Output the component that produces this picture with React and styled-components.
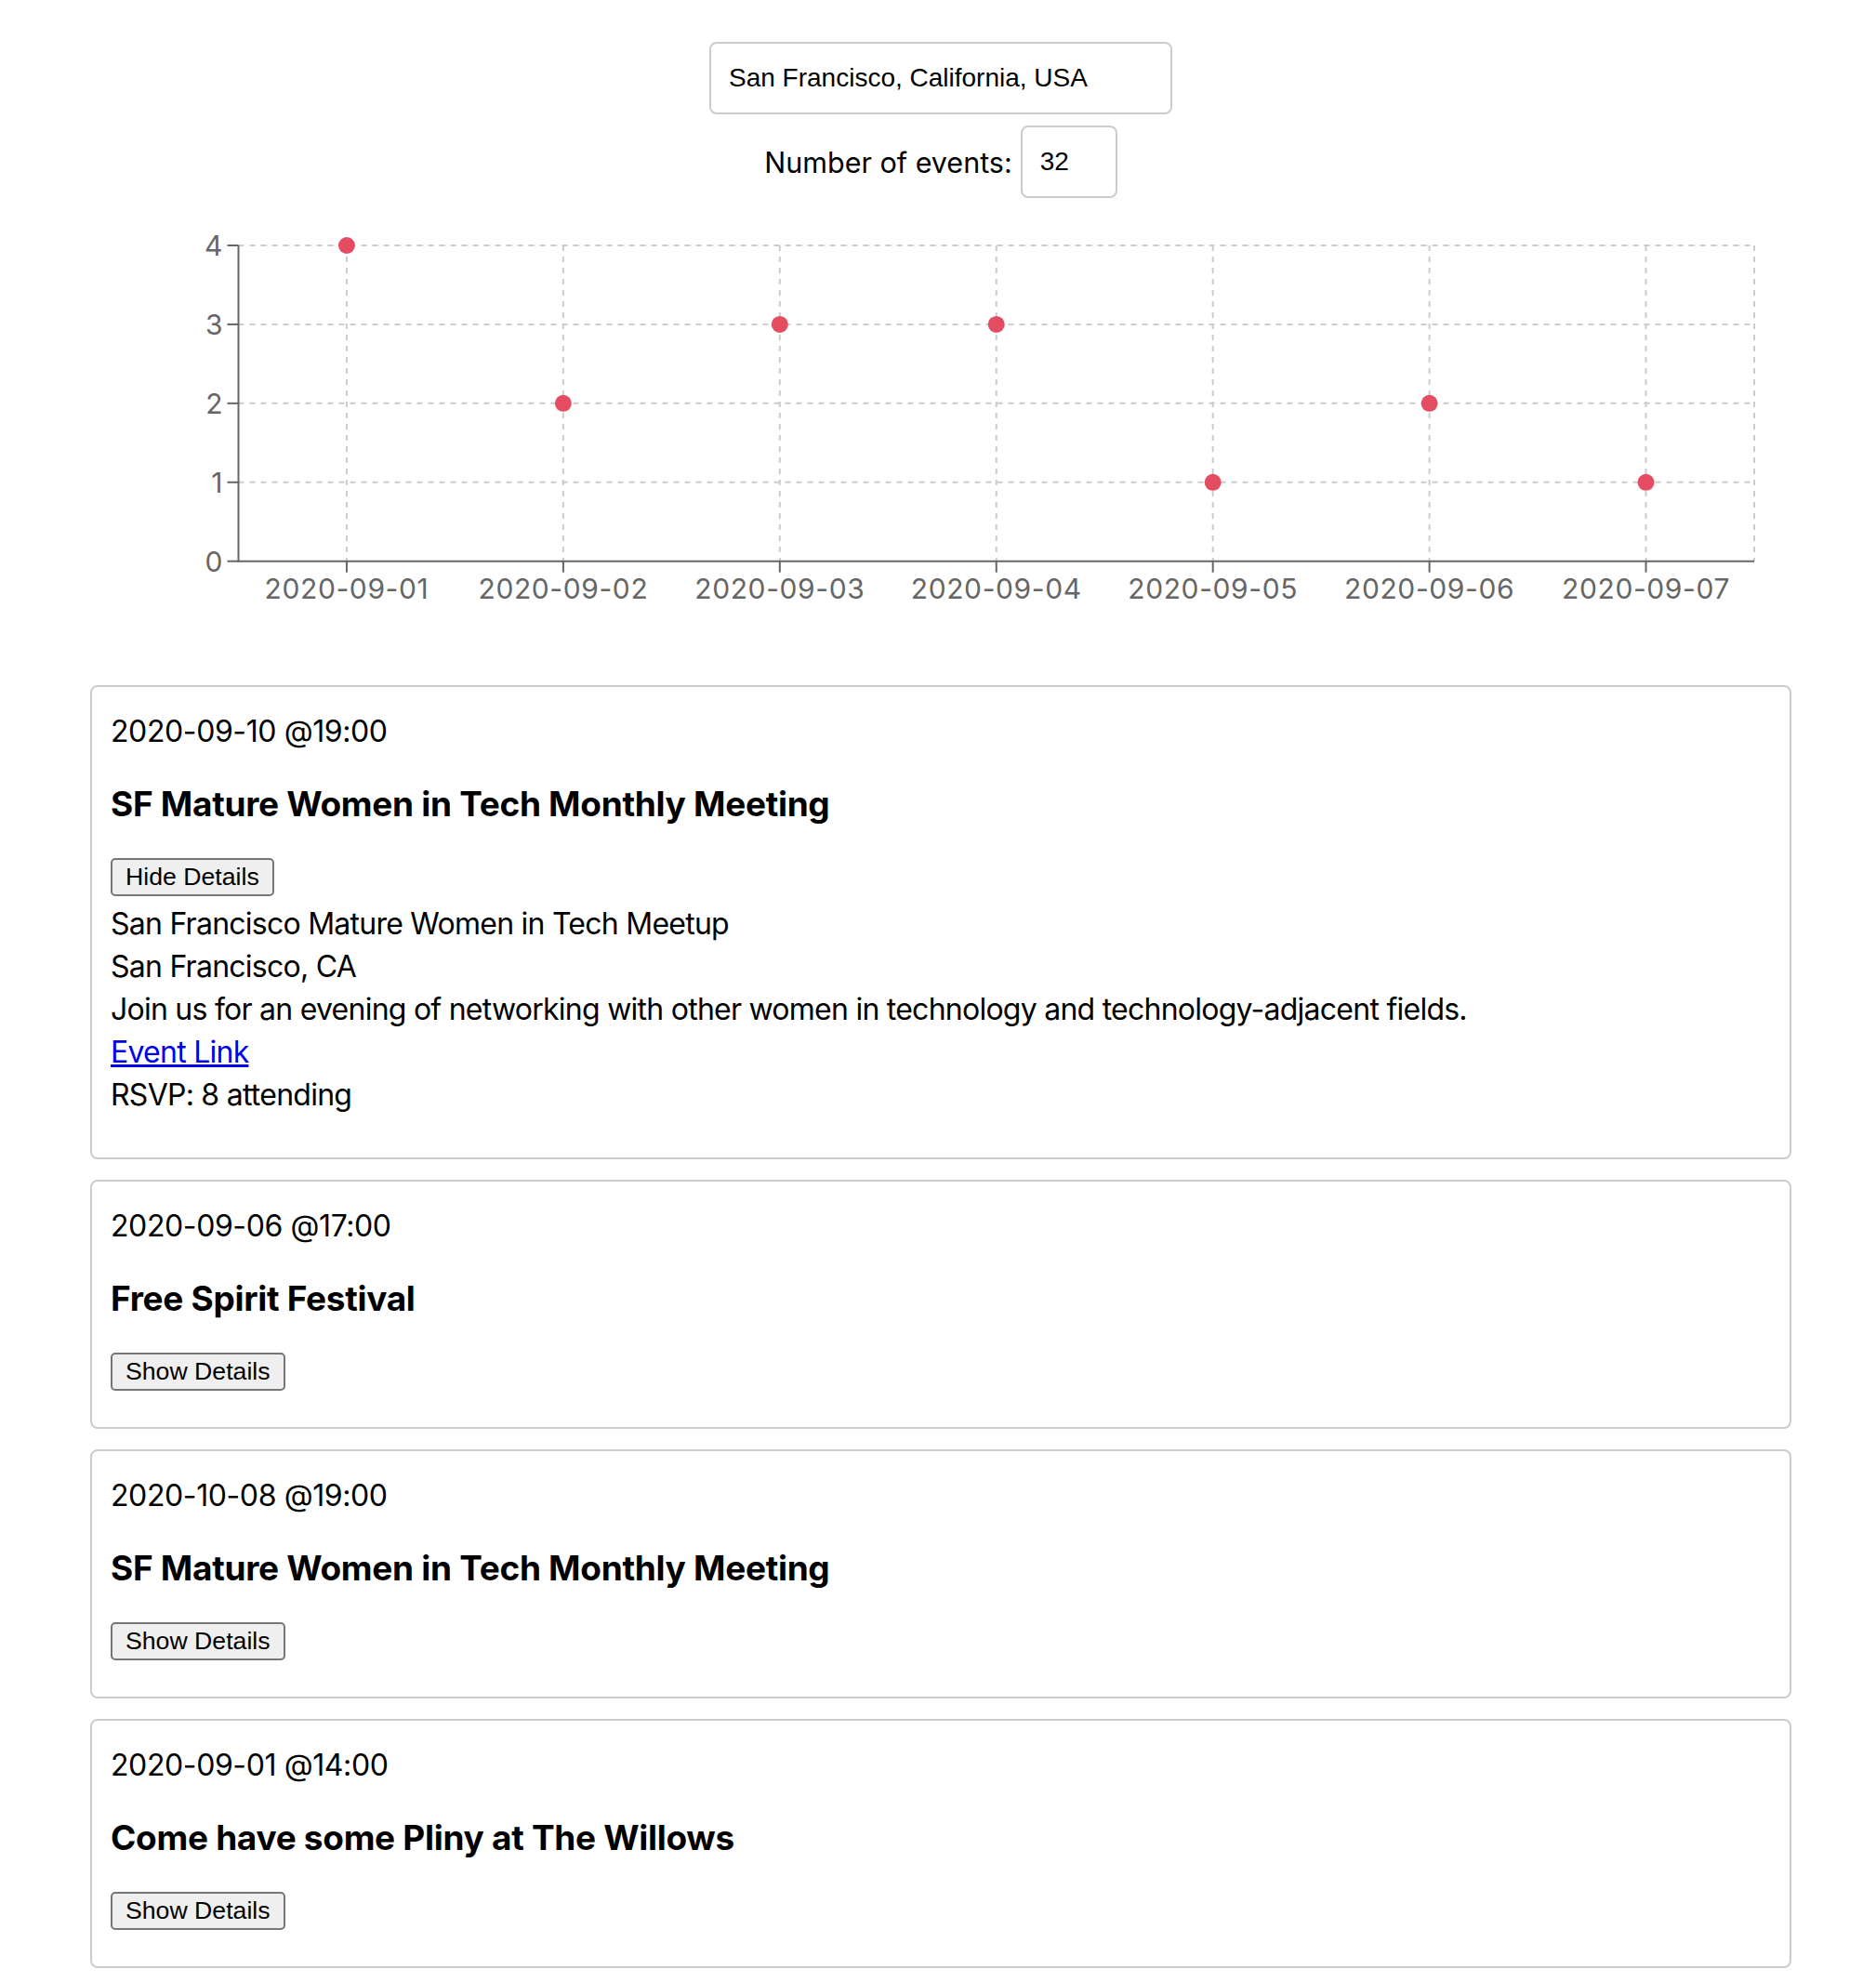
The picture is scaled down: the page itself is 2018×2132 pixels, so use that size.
import React, { useState } from 'react';
import styled, { createGlobalStyle } from 'styled-components';

const GlobalStyle = createGlobalStyle`
  html, body {
    margin: 0;
    padding: 0;
    background: #ffffff;
    overflow: hidden;
  }
  body {
    font-family: Inter, "Noto Sans", sans-serif;
    color: #000000;
  }
`;

const Header = styled.div`
  padding: 45px 0 0 6px;
  display: flex;
  flex-direction: column;
  align-items: center;
  gap: 12px;
`;

const TextInput = styled.input`
  box-sizing: border-box;
  width: ${(p) => p.$width}px;
  height: 78px;
  border: 2px solid #cccccc;
  border-radius: 8px;
  padding: 0 19px;
  font: 28px "Liberation Sans", Arial, sans-serif;
  color: #000000;
  background: #ffffff;
  outline: none;
`;

const NumberRow = styled.div`
  display: flex;
  align-items: center;
  gap: 9px;
  height: 78px;
`;

const NumberLabel = styled.label`
  font-size: 30.5px;
  color: #000000;
`;

const ChartSvg = styled.svg`
  display: block;
  width: 2018px;
  height: 524px;
`;

const CardList = styled.div`
  width: 1830px;
  margin-left: 97px;
  display: flex;
  flex-direction: column;
  gap: 22px;
`;

const Card = styled.div`
  box-sizing: border-box;
  border: 2px solid #cccccc;
  border-radius: 8px;
  padding: 25px 20px 39px;
`;

const DateLine = styled.div`
  font-size: 32px;
  line-height: 46px;
  letter-spacing: -0.4px;
`;

const Title = styled.h3`
  margin: 32px 0 35px;
  font-size: 37px;
  line-height: 46px;
  font-weight: 700;
  letter-spacing: -0.3px;
`;

const ToggleButton = styled.button`
  box-sizing: border-box;
  display: block;
  height: 41px;
  padding: 0 14px;
  border: 2px solid #767676;
  border-radius: 5px;
  background: #efefef;
  color: #000000;
  font: 26.67px "Liberation Sans", Arial, sans-serif;
  cursor: pointer;
`;

const Details = styled.div`
  margin-top: 7px;
  padding-bottom: 5px;
`;

const DetailLine = styled.div`
  font-size: 32px;
  line-height: 46px;
  letter-spacing: -0.75px;
`;

const EventLink = styled.a`
  color: #0000ee;
  text-decoration: underline;
`;

const counts = [
  { date: '2020-09-01', count: 4 },
  { date: '2020-09-02', count: 2 },
  { date: '2020-09-03', count: 3 },
  { date: '2020-09-04', count: 3 },
  { date: '2020-09-05', count: 1 },
  { date: '2020-09-06', count: 2 },
  { date: '2020-09-07', count: 1 },
];

const events = [
  {
    id: 1,
    when: '2020-09-10 @19:00',
    name: 'SF Mature Women in Tech Monthly Meeting',
    group: 'San Francisco Mature Women in Tech Meetup',
    place: 'San Francisco, CA',
    description:
      'Join us for an evening of networking with other women in technology and technology-adjacent fields.',
    rsvp: 8,
    open: true,
  },
  { id: 2, when: '2020-09-06 @17:00', name: 'Free Spirit Festival' },
  { id: 3, when: '2020-10-08 @19:00', name: 'SF Mature Women in Tech Monthly Meeting' },
  { id: 4, when: '2020-09-01 @14:00', name: 'Come have some Pliny at The Willows' },
];

// plot area inside the svg
const LEFT = 256.5;
const RIGHT = 1887;
const TOP = 51;
const BOTTOM = 390.7;
const MAX = 4;

const EventsChart = () => {
  const band = (RIGHT - LEFT) / counts.length;
  const xOf = (i) => LEFT + band * (i + 0.5);
  const yOf = (v) => BOTTOM - ((BOTTOM - TOP) * v) / MAX;
  const yTicks = [0, 1, 2, 3, 4];
  const font = 'Inter, "Noto Sans", sans-serif';

  return (
    <ChartSvg viewBox="0 0 2018 524">
      <g stroke="#cccccc" strokeWidth="2" strokeDasharray="6 6">
        {yTicks.slice(1).map((t) => (
          <line key={t} x1={LEFT} x2={RIGHT} y1={yOf(t)} y2={yOf(t)} />
        ))}
        {counts.map((c, i) => (
          <line key={c.date} x1={xOf(i)} x2={xOf(i)} y1={TOP} y2={BOTTOM} />
        ))}
        <line x1={RIGHT} x2={RIGHT} y1={TOP} y2={BOTTOM} />
      </g>

      <g stroke="#666666" strokeWidth="2">
        <line x1={LEFT} x2={LEFT} y1={TOP} y2={BOTTOM + 1} />
        <line x1={LEFT} x2={RIGHT} y1={BOTTOM} y2={BOTTOM} />
        {yTicks.map((t) => (
          <line key={t} x1={LEFT - 12} x2={LEFT} y1={yOf(t)} y2={yOf(t)} />
        ))}
        {counts.map((c, i) => (
          <line key={c.date} x1={xOf(i)} x2={xOf(i)} y1={BOTTOM} y2={BOTTOM + 12} />
        ))}
      </g>

      <g fill="#666666" fontFamily={font} fontSize="30">
        {yTicks.map((t) => (
          <text key={t} x={LEFT - 17} y={yOf(t)} dy="0.36em" textAnchor="end">
            {t}
          </text>
        ))}
        {counts.map((c, i) => (
          <text
            key={c.date}
            x={xOf(i)}
            y={BOTTOM + 40}
            textAnchor="middle"
            letterSpacing="0.6"
          >
            {c.date}
          </text>
        ))}
      </g>

      <g fill="#e34c61">
        {counts.map((c, i) => (
          <circle key={c.date} cx={xOf(i)} cy={yOf(c.count)} r="9" />
        ))}
      </g>
    </ChartSvg>
  );
};

const EventCard = ({ event }) => {
  const [open, setOpen] = useState(!!event.open);

  return (
    <Card>
      <DateLine>{event.when}</DateLine>
      <Title>{event.name}</Title>
      <ToggleButton onClick={() => setOpen(!open)}>
        {open ? 'Hide Details' : 'Show Details'}
      </ToggleButton>
      {open && (
        <Details>
          <DetailLine>{event.group || 'Details unavailable'}</DetailLine>
          <DetailLine>{event.place}</DetailLine>
          <DetailLine>{event.description}</DetailLine>
          <DetailLine>
            <EventLink href="#event">Event Link</EventLink>
          </DetailLine>
          <DetailLine>RSVP: {event.rsvp || 0} attending</DetailLine>
        </Details>
      )}
    </Card>
  );
};

const App = () => {
  const [city, setCity] = useState('San Francisco, California, USA');
  const [number, setNumber] = useState('32');

  return (
    <>
      <GlobalStyle />
      <Header>
        <TextInput $width={498} value={city} onChange={(e) => setCity(e.target.value)} />
        <NumberRow>
          <NumberLabel htmlFor="number-of-events">Number of events:</NumberLabel>
          <TextInput
            id="number-of-events"
            $width={104}
            value={number}
            onChange={(e) => setNumber(e.target.value)}
          />
        </NumberRow>
      </Header>
      <EventsChart />
      <CardList>
        {events.map((ev) => (
          <EventCard key={ev.id} event={ev} />
        ))}
      </CardList>
    </>
  );
};

export default App;
